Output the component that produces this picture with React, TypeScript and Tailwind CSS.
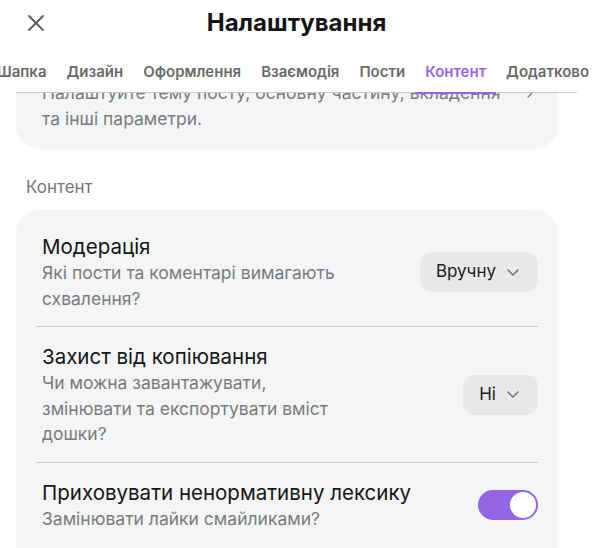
import React from "react";

const tabs = ["Шапка", "Дизайн", "Оформлення", "Взаємодія", "Пости", "Контент", "Додатково"];

function Chevron() {
  return (
    <svg width="12" height="7" viewBox="0 0 12 7" fill="none" className="ml-[11px] shrink-0">
      <path d="M1 1l5 5 5-5" stroke="#6b6b6b" strokeWidth="1.3" strokeLinecap="round" strokeLinejoin="round" />
    </svg>
  );
}

function SelectButton({ label }: { label: string }) {
  return (
    <div className="flex items-center h-10 rounded-xl bg-[#e8e8ea] pl-4 pr-[19px] text-[17px] text-[#1c1c1c] shrink-0">
      <span>{label}</span>
      <Chevron />
    </div>
  );
}

function Row({
  title,
  sub,
  right,
  last,
}: {
  title: string;
  sub: string[];
  right: React.ReactNode;
  last?: boolean;
}) {
  return (
    <div className={`flex items-center justify-between pt-4 pb-[15px] ${last ? "" : "border-b border-[#c9c9cc]"}`}>
      <div className="pl-1.5 flex flex-col">
        <div className="text-[20.5px] leading-[27px] text-[#161616]">{title}</div>
        <div className="text-[17.5px] leading-[25.5px] text-[#7b7b7b]">
          {sub.map((s, i) => (
            <div key={i}>{s}</div>
          ))}
        </div>
      </div>
      {right}
    </div>
  );
}

export default function App() {
  return (
    <div className="w-[593px] h-[548px] overflow-hidden bg-white flex flex-col font-['Inter',sans-serif]">
      <div className="grid grid-cols-[72px_1fr_72px] h-[46px] items-center shrink-0">
        <div className="flex justify-center">
          <svg width="28" height="28" viewBox="0 0 24 24" fill="none" stroke="#5f5f5f" strokeWidth="1.6" strokeLinecap="round">
            <path d="M18 6 6 18" />
            <path d="m6 6 12 12" />
          </svg>
        </div>
        <div className="text-center text-[24px] font-bold text-[#141414] leading-7">Налаштування</div>
        <div />
      </div>
      <div className="flex ml-[-13px] shrink-0 whitespace-nowrap">
        {tabs.map((t) => (
          <div
            key={t}
            className={`px-2.5 pt-4 pb-2.5 text-[15px] leading-5 font-semibold ${
              t === "Контент" ? "text-[#9466e6] border-b-2 border-[#9466e6] mb-[-2px] relative z-10" : "text-[#6a6a6a]"
            }`}
          >
            {t}
          </div>
        ))}
      </div>
      <div className="mx-4 h-px bg-[#c9c9cc] shrink-0" />
      <div className="flex-1 overflow-hidden flex flex-col">
        <div className="ml-4 mr-[35px] mt-[-31px] rounded-[24px] bg-[#f4f5f7] pl-[26px] pr-5 pt-[18px] pb-[18px] flex items-start justify-between shrink-0">
          <div className="text-[17.5px] leading-[25.5px] text-[#7b7b7b]">
            <div>Налаштуйте тему посту, основну частину, вкладення</div>
            <div>та інші параметри.</div>
          </div>
          <svg width="16" height="16" viewBox="0 0 24 24" fill="none" stroke="#6b6b6b" strokeWidth="1.6" strokeLinecap="round" strokeLinejoin="round" className="mt-[5px] shrink-0">
            <path d="m9 6 6 6-6 6" />
          </svg>
        </div>
        <div className="ml-[26px] mt-7 text-[17px] leading-5 text-[#777777] shrink-0">Контент</div>
        <div className="ml-4 mr-[35px] mt-[13px] rounded-[24px] bg-[#f4f5f7] px-5 pt-[7px] pb-6 shrink-0">
          <Row title="Модерація" sub={["Які пости та коментарі вимагають", "схвалення?"]} right={<SelectButton label="Вручну" />} />
          <Row
            title="Захист від копіювання"
            sub={["Чи можна завантажувати,", "змінювати та експортувати вміст", "дошки?"]}
            right={<SelectButton label="Ні" />}
          />
          <Row
            title="Приховувати ненормативну лексику"
            sub={["Замінювати лайки смайликами?"]}
            last
            right={
              <div className="w-[60px] h-[30px] rounded-full bg-[#9466e6] p-[2px] flex justify-end shrink-0">
                <div className="w-[26px] h-[26px] rounded-full bg-white" />
              </div>
            }
          />
        </div>
      </div>
    </div>
  );
}
